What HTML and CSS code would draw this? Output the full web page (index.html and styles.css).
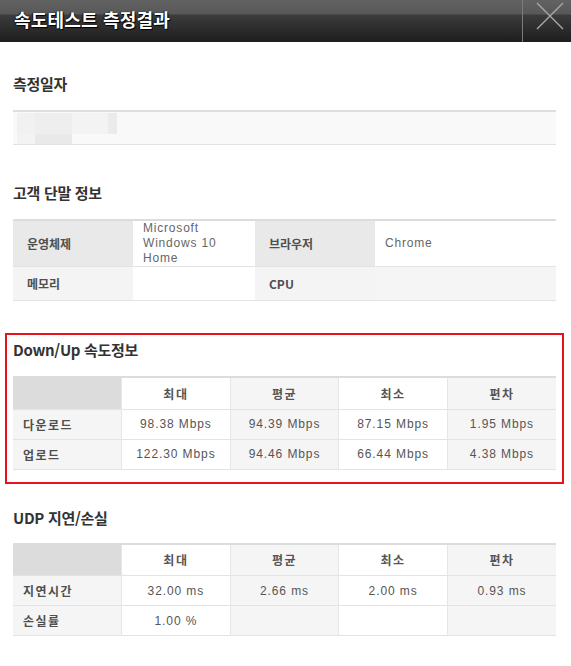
FILE: index.html
```html
<!DOCTYPE html>
<html lang="ko">
<head>
<meta charset="utf-8">
<title>속도테스트 측정결과</title>
<link rel="stylesheet" href="styles.css">
</head>
<body>
<div class="header">
  <div class="title">속도테스트 측정결과</div>
  <div class="close">
    <svg class="close-icon" width="28" height="28" viewBox="0 0 28 28"><path d="M1 1L27 27M27 1L1 27" stroke="#a9a9a9" stroke-width="1.4" fill="none"/></svg>
  </div>
</div>
<div class="content">
  <section class="section first">
    <h2 class="heading">측정일자</h2>
    <div class="date-box">
      <div class="blur-row top">
        <span class="b b1"></span><span class="b b2"></span><span class="b b3"></span><span class="b b4"></span><span class="b b5"></span>
      </div>
      <div class="blur-row bottom">
        <span class="b b6"></span><span class="b b7"></span>
      </div>
    </div>
  </section>

  <section class="section after-date">
    <h2 class="heading">고객 단말 정보</h2>
    <table class="info">
      <colgroup><col class="c1"><col class="c2"><col class="c3"><col class="c4"></colgroup>
      <tr class="r1">
        <th class="th-dark">운영체제</th>
        <td class="val white multi">Microsoft<br>Windows 10<br>Home</td>
        <th class="th-dark">브라우저</th>
        <td class="val white">Chrome</td>
      </tr>
      <tr class="r2">
        <th class="th-light">메모리</th>
        <td class="val white"></td>
        <th class="th-light">CPU</th>
        <td class="val light"></td>
      </tr>
    </table>
  </section>

  <section class="section marked">
    <h2 class="heading">Down/Up 속도정보</h2>
    <table class="grid">
      <tr class="hrow">
        <th class="corner"></th>
        <th class="white">최대</th>
        <th class="light">평균</th>
        <th class="white">최소</th>
        <th class="light">편차</th>
      </tr>
      <tr>
        <th class="label">다운로드</th>
        <td class="white">98.38 Mbps</td>
        <td class="light">94.39 Mbps</td>
        <td class="white">87.15 Mbps</td>
        <td class="light">1.95 Mbps</td>
      </tr>
      <tr>
        <th class="label">업로드</th>
        <td class="white">122.30 Mbps</td>
        <td class="light">94.46 Mbps</td>
        <td class="white">66.44 Mbps</td>
        <td class="light">4.38 Mbps</td>
      </tr>
    </table>
  </section>

  <section class="section udp">
    <h2 class="heading">UDP 지연/손실</h2>
    <table class="grid">
      <tr class="hrow">
        <th class="corner"></th>
        <th class="white">최대</th>
        <th class="light">평균</th>
        <th class="white">최소</th>
        <th class="light">편차</th>
      </tr>
      <tr>
        <th class="label">지연시간</th>
        <td class="white">32.00 ms</td>
        <td class="light">2.66 ms</td>
        <td class="white">2.00 ms</td>
        <td class="light">0.93 ms</td>
      </tr>
      <tr>
        <th class="label">손실률</th>
        <td class="white">1.00 %</td>
        <td class="light"></td>
        <td class="white"></td>
        <td class="light"></td>
      </tr>
    </table>
  </section>
</div>
</body>
</html>
```

FILE: styles.css
```css
* { box-sizing: border-box; }
html, body { margin: 0; padding: 0; background: #fff; }
body {
  font-family: "Noto Sans CJK KR", "Noto Sans", sans-serif;
  color: #333;
}

.header {
  display: flex;
  height: 42px;
  background: linear-gradient(#626262 0, #585858 14px, #3c3c3c 15px, #1d1d1d 100%);
}
.title {
  flex: 1;
  padding-left: 14px;
  font-size: 18px;
  font-weight: 700;
  line-height: 38px;
  color: #fff;
  text-shadow: 1px 1px 1px #000, -1px 0 1px #111;
  letter-spacing: 0.2px;
}
.close {
  width: 49px;
  border-left: 1px solid #7b7b7b;
  padding: 2px 0 0 13px;
}
.close-icon { display: block; }

.content { padding: 0 15px 0 13px; }

.section { margin-top: 39px; position: relative; }
.section.first { margin-top: 32px; }
.section.after-date { margin-top: 38px; }
.section.udp { margin-top: 38px; }
.heading {
  margin: 0 0 16px;
  height: 20px;
  line-height: 20px;
  font-size: 15px;
  font-weight: 700;
  color: #333;
  letter-spacing: -0.3px;
}
.udp .heading { margin-bottom: 15px; }

.marked::before {
  content: "";
  position: absolute;
  top: -7px;
  left: -8px;
  right: -8px;
  bottom: -14px;
  border: 2px solid #e8121a;
  pointer-events: none;
}

/* date box */
.date-box {
  border-top: 2px solid #dedede;
  border-bottom: 1px solid #e2e2e2;
  background: #f9f9f9;
  height: 35px;
  padding: 1px 0 0 4px;
}
.blur-row { display: flex; }
.blur-row.top { height: 21px; }
.blur-row.bottom { height: 10px; }
.b { display: block; height: 100%; }
.b1 { width: 18px; background: #f1f1f1; }
.b2 { width: 37px; background: #eeeeee; }
.b3 { width: 18px; background: #f3f3f3; }
.b4 { width: 18px; background: #f3f3f3; }
.b5 { width: 9px;  background: #ebebeb; }
.b6 { width: 18px; background: #f3f3f3; }
.b7 { width: 37px; background: #e9e9e9; }

/* tables */
table {
  width: 100%;
  border-collapse: collapse;
  table-layout: fixed;
  border-top: 2px solid #dcdcdc;
}
th, td {
  padding: 0;
  font-size: 12px;
}
.white { background: #fff; }
.light { background: #f5f5f5; }

.info .c1 { width: 120px; }
.info .c2 { width: 122px; }
.info .c3 { width: 120px; }
.info tr { border-bottom: 1px solid #e3e3e3; }
.info .r1 { height: 45px; }
.info .r2 { height: 34px; }
.info th {
  text-align: left;
  padding-left: 14px;
  font-weight: 700;
  color: #4f4f4f;
}
.info .th-dark { background: #e9e9e9; }
.info .th-light { background: #f4f4f4; }
.info .val {
  padding: 0 8px 0 10px;
  font-family: "Liberation Sans", "Noto Sans CJK KR", sans-serif;
  color: #666;
  letter-spacing: 0.8px;
  line-height: 15px;
}

.grid tr { border-bottom: 1px solid #e3e3e3; height: 30px; }
.grid .hrow { height: 32px; }
.grid th, .grid td { border-left: 1px solid #e6e6e6; text-align: center; }
.grid th:first-child { border-left: none; }
.grid .hrow th {
  font-weight: 700;
  color: #555;
  letter-spacing: 1.5px;
}
.grid .corner { background: #dcdcdc; }
.grid .label {
  text-align: left;
  padding-left: 10px;
  background: #f5f5f5;
  font-weight: 700;
  color: #4f4f4f;
  letter-spacing: 1.5px;
}
.grid td {
  font-family: "Liberation Sans", "Noto Sans CJK KR", sans-serif;
  color: #555;
  letter-spacing: 0.9px;
}
```
